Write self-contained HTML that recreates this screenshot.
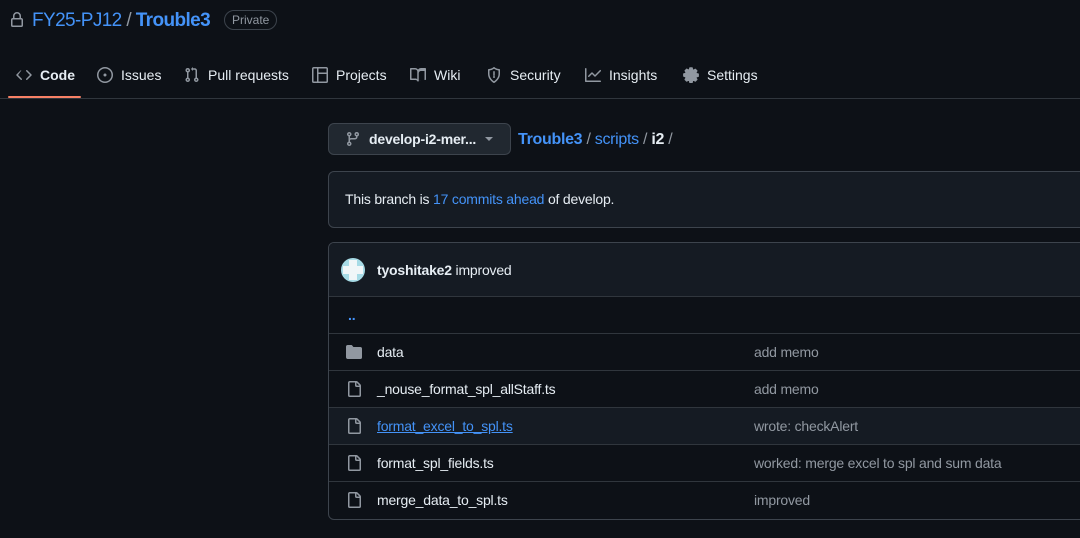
<!DOCTYPE html>
<html><head><meta charset="utf-8"><style>
*{box-sizing:border-box;margin:0;padding:0}
body{width:1080px;height:538px;overflow:hidden;background:#0d1117;color:#e6edf3;font-family:"Liberation Sans",sans-serif;font-size:14px;position:relative}
.a{position:absolute}
.blue{color:#4493f8}
svg{display:block}
.nav{position:absolute;top:63px;height:24px;display:flex;align-items:center;gap:8px;font-size:14px;color:#e6edf3}
.nav svg{fill:#9198a1}
.row{position:absolute;left:329px;width:760px;height:37px;border-top:1px solid #30363d;display:flex;align-items:center;letter-spacing:-0.2px}
.row .n{position:absolute;left:48px}
.row .m{position:absolute;left:425px;color:#9198a1}
.row svg{position:absolute;left:17px;fill:#9198a1}
</style></head><body>
<svg class="a" style="left:9px;top:12px" width="16" height="16" viewBox="0 0 16 16" fill="#9198a1"><path d="M4 4a4 4 0 0 1 8 0v2h.25c.97 0 1.75.78 1.75 1.75v5.5A1.75 1.75 0 0 1 12.25 15h-8.5A1.75 1.75 0 0 1 2 13.25v-5.5C2 6.78 2.78 6 3.75 6H4Zm8.25 3.5h-8.5a.25.25 0 0 0-.25.25v5.5c0 .14.11.25.25.25h8.5a.25.25 0 0 0 .25-.25v-5.5a.25.25 0 0 0-.25-.25ZM10.5 6V4a2.5 2.5 0 1 0-5 0v2Z"/></svg>
<div class="a" style="left:32px;top:10px;font-size:19px;letter-spacing:-0.6px;white-space:nowrap"><span class="blue">FY25-PJ12</span> <span style="color:#9198a1">/</span> <span class="blue" style="font-weight:bold">Trouble3</span></div>
<div class="a" style="left:224px;top:10px;height:20px;padding:0 7px;border:1px solid #3d444d;border-radius:10px;font-size:12px;line-height:18px;color:#9198a1">Private</div>

<div class="nav" style="left:16px"><svg width="16" height="16" viewBox="0 0 16 16"><path d="m11.28 3.22 4.25 4.25a.75.75 0 0 1 0 1.06l-4.25 4.25a.75.75 0 0 1-1.06-1.06L13.940 8l-3.72-3.72a.75.75 0 0 1 1.06-1.06Zm-6.56 0a.75.75 0 0 1 0 1.06L2.06 8l3.72 3.72a.75.75 0 0 1-1.06 1.06L.47 8.53a.75.75 0 0 1 0-1.06l4.250-4.25a.75.75 0 0 1 1.06 0Z"/></svg><b>Code</b></div>
<div class="a" style="left:8px;top:96px;width:73px;height:2px;background:#f78166;border-radius:1px"></div>
<div class="nav" style="left:97px"><svg width="16" height="16" viewBox="0 0 16 16"><path d="M8 9.5a1.5 1.5 0 1 0 0-3 1.5 1.5 0 0 0 0 3Z"/><path d="M8 0a8 8 0 1 1 0 16A8 8 0 0 1 8 0ZM1.5 8a6.5 6.5 0 1 0 13 0 6.5 6.5 0 0 0-13 0Z"/></svg>Issues</div>
<div class="nav" style="left:184px"><svg width="16" height="16" viewBox="0 0 16 16"><path d="M1.5 3.25a2.25 2.25 0 1 1 3 2.12v5.26a2.25 2.25 0 1 1-1.5 0V5.37A2.25 2.25 0 0 1 1.5 3.25Zm5.68-1.53 1.75-1.75v1.28h1.82A2.25 2.25 0 0 1 13 3.5v7.13a2.25 2.25 0 1 1-1.5 0V3.5a.75.75 0 0 0-.75-.75H8.930v1.28L7.18 2.28a.25.25 0 0 1 0-.56ZM3.75 2.5a.75.75 0 1 0 0 1.5.75.75 0 0 0 0-1.5Zm0 9.5a.75.75 0 1 0 0 1.5.75.75 0 0 0 0-1.5Zm8.5 0a.75.75 0 1 0 0 1.5.75.75 0 0 0 0-1.5Z"/></svg>Pull requests</div>
<div class="nav" style="left:312px"><svg width="16" height="16" viewBox="0 0 16 16"><path d="M1.75 0h12.5C15.22 0 16 .78 16 1.75v12.5A1.75 1.75 0 0 1 14.25 16H1.75A1.75 1.75 0 0 1 0 14.25V1.75C0 .78.78 0 1.75 0ZM1.5 1.750v12.5c0 .14.11.25.25.25H5v-13H1.75a.25.25 0 0 0-.25.25ZM6.5 14.5h7.75a.25.25 0 0 0 .25-.25V7h-8Zm8-9V1.75a.25.25 0 0 0-.25-.25H6.5v4Z"/></svg>Projects</div>
<div class="nav" style="left:410px"><svg width="16" height="16" viewBox="0 0 16 16"><path d="M0 1.75A.75.75 0 0 1 .75 1h4.25c1.2 0 2.27.57 3 1.44A3.74 3.74 0 0 1 11 1h4.25a.75.75 0 0 1 .75.75v10.5a.75.75 0 0 1-.75.75h-4.51a2.25 2.25 0 0 0-2.24 1.5h-1a2.25 2.25 0 0 0-2.24-1.5H.75a.75.75 0 0 1-.75-.75Zm7.25 2.5A2.25 2.25 0 0 0 5 2.5H1.5v9h3.76c.74 0 1.45.25 2 .7Zm1.5 9.44a3.75 3.75 0 0 1 2-.69h3.75v-9H11a2.25 2.25 0 0 0-2.25 2.25Z"/></svg>Wiki</div>
<div class="nav" style="left:486px"><svg width="16" height="16" viewBox="0 0 16 16"><path d="M7.47.22a.75.75 0 0 1 1.06 0C9.770 1.3 11.5 2 13.25 2a.75.75 0 0 1 .75.75V7c0 4.6-3.9 7.9-5.76 8.95a.5.5 0 0 1-.48 0C5.9 14.9 2 11.6 2 7V2.75A.75.75 0 0 1 2.75 2C4.5 2 6.23 1.3 7.47.22ZM3.5 3.48V7c0 3.6 2.9 6.3 4.5 7.3 1.6-1 4.5-3.7 4.5-7.3V3.48A10.3 10.3 0 0 1 8 1.74a10.3 10.3 0 0 1-4.5 1.74ZM8 4a.75.75 0 0 1 .75.75v3.5a.75.75 0 0 1-1.5 0v-3.5A.75.75 0 0 1 8 4Zm0 7a1 1 0 1 1 0-2 1 1 0 0 1 0 2Z"/></svg>Security</div>
<div class="nav" style="left:585px"><svg width="16" height="16" viewBox="0 0 16 16"><path d="M1.5 1.75V13.5h13.75a.75.75 0 0 1 0 1.5H.75a.75.75 0 0 1-.75-.75V1.75a.75.75 0 0 1 1.5 0Zm14.28 2.53-5.25 5.25a.75.75 0 0 1-1.06 0L7 7.06 4.28 9.78a.75.75 0 0 1-1.06-1.06l3.25-3.25a.75.75 0 0 1 1.06 0L10 7.94l4.72-4.72a.75.75 0 1 1 1.06 1.06Z"/></svg>Insights</div>
<div class="nav" style="left:683px"><svg width="16" height="16" viewBox="0 0 16 16" fill="none" stroke="#9198a1" stroke-width="1.4"><circle cx="8" cy="8" r="2.3"/><path d="M6.9 1h2.2l.4 1.8 1.2.6 1.6-1 1.5 1.5-1 1.6.6 1.2 1.8.4v2.2l-1.8.4-.6 1.2 1 1.6-1.5 1.5-1.6-1-1.2.6-.4 1.8H6.9l-.4-1.8-1.2-.6-1.6 1-1.5-1.5 1-1.6-.6-1.2L.8 9.1V6.9l1.8-.4.6-1.2-1-1.6 1.5-1.5 1.6 1 1.2-.6Z" stroke-linejoin="round"/></svg>Settings</div>
<div class="a" style="left:0;top:98px;width:1080px;height:1px;background:#30363d"></div>

<div class="a" style="left:328px;top:123px;width:183px;height:32px;background:#212830;border:1px solid #3d444d;border-radius:6px;display:flex;align-items:center;padding-left:16px;font-weight:bold;font-size:14px;letter-spacing:-0.2px">
<svg width="16" height="16" viewBox="0 0 16 16" fill="#9198a1"><path d="M9.5 3.25a2.25 2.25 0 1 1 3 2.12V6A2.5 2.5 0 0 1 10 8.5H6a1 1 0 0 0-1 1v1.13a2.25 2.25 0 1 1-1.5 0V5.37a2.25 2.25 0 1 1 1.5 0v1.84A2.5 2.5 0 0 1 6 7h4a1 1 0 0 0 1-1v-.63A2.25 2.25 0 0 1 9.5 3.25Zm-6 0a.75.75 0 1 0 1.5 0 .75.75 0 0 0-1.5 0Zm8.25-.75a.75.75 0 1 0 0 1.5.75.75 0 0 0 0-1.5ZM4.25 12a.75.75 0 1 0 0 1.5.75.75 0 0 0 0-1.5Z"/></svg>
<span style="margin-left:8px">develop-i2-mer...</span>
<span style="margin-left:9px;width:0;height:0;border-left:4px solid transparent;border-right:4px solid transparent;border-top:4px solid #9198a1"></span></div>
<div class="a" style="left:518px;top:131px;font-size:16px;letter-spacing:-0.3px"><b class="blue">Trouble3</b> <span style="color:#9198a1">/</span> <span class="blue">scripts</span> <span style="color:#9198a1">/</span> <b>i2</b> <span style="color:#9198a1">/</span></div>

<div class="a" style="left:328px;top:171px;width:770px;height:57px;background:#151b23;border:1px solid #3d444d;border-radius:6px;padding:19px 16px;font-size:14px;letter-spacing:-0.2px">This branch is <span class="blue">17 commits ahead</span> of develop.</div>

<div class="a" style="left:328px;top:242px;width:770px;height:278px;border:1px solid #3d444d;border-radius:6px;overflow:hidden">
<div style="height:54px;background:#151b23;display:flex;align-items:center;padding-left:12px;letter-spacing:-0.2px">
<div style="width:24px;height:24px;border-radius:50%;background:#a7dbe6;position:relative;overflow:hidden"><div style="position:absolute;left:8px;top:2px;width:8px;height:20px;background:#f0f6f8"></div><div style="position:absolute;left:2px;top:8px;width:20px;height:8px;background:#f0f6f8"></div></div>
<span style="margin-left:12px"><b>tyoshitake2</b> improved</span></div>
</div>
<div class="row" style="top:296px;border-top-color:#30363d"><span class="n blue" style="left:19px;font-weight:bold">..</span></div>
<div class="row" style="top:333px"><svg width="16" height="16" viewBox="0 0 16 16"><path d="M1.75 1A1.75 1.75 0 0 0 0 2.75v10.5C0 14.22.78 15 1.75 15h12.5A1.75 1.75 0 0 0 16 13.25v-8.5A1.75 1.75 0 0 0 14.25 3H7.5a.25.25 0 0 1-.2-.1l-.9-1.2C6.07 1.26 5.55 1 5 1H1.75Z"/></svg><span class="n">data</span><span class="m">add memo</span></div>
<div class="row" style="top:370px"><svg width="16" height="16" viewBox="0 0 16 16"><path d="M2 1.75C2 .78 2.78 0 3.75 0h6.59c.46 0 .91.18 1.24.51l2.91 2.91c.33.33.51.78.51 1.24v9.59A1.75 1.75 0 0 1 13.25 16h-9.5A1.75 1.75 0 0 1 2 14.25Zm1.75-.25a.25.25 0 0 0-.25.25v12.5c0 .14.11.25.25.25h9.5a.25.25 0 0 0 .25-.25V6h-2.75A1.75 1.75 0 0 1 9 4.25V1.5Zm6.75.06V4.25c0 .14.11.25.25.25h2.69l-.03-.03-2.88-2.88Z"/></svg><span class="n">_nouse_format_spl_allStaff.ts</span><span class="m">add memo</span></div>
<div class="row" style="top:407px;background:#151b23"><svg width="16" height="16" viewBox="0 0 16 16"><path d="M2 1.75C2 .78 2.78 0 3.75 0h6.59c.46 0 .91.18 1.24.51l2.91 2.91c.33.33.51.78.51 1.24v9.59A1.75 1.75 0 0 1 13.25 16h-9.5A1.75 1.75 0 0 1 2 14.25Zm1.75-.25a.25.25 0 0 0-.25.25v12.5c0 .14.11.25.25.25h9.5a.25.25 0 0 0 .25-.25V6h-2.75A1.75 1.75 0 0 1 9 4.25V1.5Zm6.75.06V4.25c0 .14.11.25.25.25h2.69l-.03-.03-2.88-2.88Z"/></svg><span class="n blue" style="text-decoration:underline">format_excel_to_spl.ts</span><span class="m">wrote: checkAlert</span></div>
<div class="row" style="top:444px"><svg width="16" height="16" viewBox="0 0 16 16"><path d="M2 1.75C2 .78 2.78 0 3.75 0h6.59c.46 0 .91.18 1.24.51l2.91 2.91c.33.33.51.78.51 1.24v9.59A1.75 1.75 0 0 1 13.25 16h-9.5A1.75 1.75 0 0 1 2 14.25Zm1.75-.25a.25.25 0 0 0-.25.25v12.5c0 .14.11.25.25.25h9.5a.25.25 0 0 0 .25-.25V6h-2.75A1.75 1.75 0 0 1 9 4.25V1.5Zm6.75.06V4.25c0 .14.11.25.25.25h2.69l-.03-.03-2.88-2.88Z"/></svg><span class="n">format_spl_fields.ts</span><span class="m">worked: merge excel to spl and sum data</span></div>
<div class="row" style="top:481px"><svg width="16" height="16" viewBox="0 0 16 16"><path d="M2 1.75C2 .78 2.78 0 3.75 0h6.59c.46 0 .91.18 1.24.51l2.91 2.91c.33.33.51.78.51 1.24v9.59A1.75 1.75 0 0 1 13.25 16h-9.5A1.75 1.75 0 0 1 2 14.25Zm1.75-.25a.25.25 0 0 0-.25.25v12.5c0 .14.11.25.25.25h9.5a.25.25 0 0 0 .25-.25V6h-2.75A1.75 1.75 0 0 1 9 4.25V1.5Zm6.75.06V4.25c0 .14.11.25.25.25h2.69l-.03-.03-2.88-2.88Z"/></svg><span class="n">merge_data_to_spl.ts</span><span class="m">improved</span></div>
</body></html>
